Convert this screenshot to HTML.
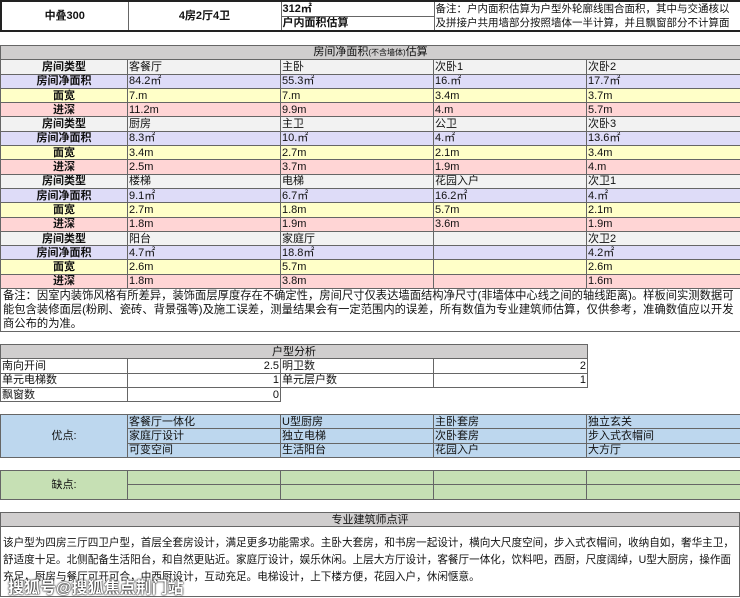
<!DOCTYPE html>
<html><head><meta charset="utf-8"><style>
*{margin:0;padding:0;box-sizing:border-box}
body{width:740px;height:598px;background:#fff;font-family:"Liberation Sans","Noto Sans CJK SC",sans-serif;font-size:11px;color:#111;position:relative;overflow:hidden}
table{border-collapse:collapse;table-layout:fixed;position:absolute;left:0}
td{border:1px solid #666;height:14.3px;line-height:12px;padding:0 1px;white-space:nowrap;overflow:hidden;font-size:11px}
.c{text-align:center}.r{text-align:right}
.g{background:#d0cece;text-align:center}
.t{background:#f2f2f2}.a{background:#dedcf8}.y{background:#ffffc8}.p{background:#ffd5d5}
.t td:first-child,.a td:first-child,.y td:first-child,.p td:first-child{text-align:center;font-weight:bold}
.b td{background:#bdd7ee}.gr td{background:#c6e0b4}
</style></head><body>
<table style="top:0;width:740px;border:2px solid #222">
<colgroup><col style="width:127px"><col style="width:153px"><col style="width:153px"><col style="width:307px"></colgroup>
<tr><td rowspan="2" class="c" style="font-weight:bold;height:28px">中叠300</td><td rowspan="2" class="c" style="font-weight:bold">4房2厅4卫</td><td style="font-weight:bold;height:14px">312㎡</td><td rowspan="2" style="white-space:normal;line-height:14px;font-size:10.5px;vertical-align:top;overflow:hidden">备注：户内面积估算为户型外轮廓线围合面积，其中与交通核以及拼接户共用墙部分按照墙体一半计算，并且飘窗部分不计算面</td></tr>
<tr><td style="font-weight:bold;height:14px">户内面积估算</td></tr>
</table>
<table style="top:45px;width:740px">
<colgroup><col style="width:127px"><col style="width:153px"><col style="width:153px"><col style="width:153px"><col style="width:154px"></colgroup>
<tr><td colspan="5" class="g">房间净面积<span style="font-size:8px">(不含墙体)</span>估算</td></tr>
<tr class="t"><td>房间类型</td><td>客餐厅</td><td>主卧</td><td>次卧1</td><td>次卧2</td></tr>
<tr class="a"><td>房间净面积</td><td>84.2㎡</td><td>55.3㎡</td><td>16.㎡</td><td>17.7㎡</td></tr>
<tr class="y"><td>面宽</td><td>7.m</td><td>7.m</td><td>3.4m</td><td>3.7m</td></tr>
<tr class="p"><td>进深</td><td>11.2m</td><td>9.9m</td><td>4.m</td><td>5.7m</td></tr>
<tr class="t"><td>房间类型</td><td>厨房</td><td>主卫</td><td>公卫</td><td>次卧3</td></tr>
<tr class="a"><td>房间净面积</td><td>8.3㎡</td><td>10.㎡</td><td>4.㎡</td><td>13.6㎡</td></tr>
<tr class="y"><td>面宽</td><td>3.4m</td><td>2.7m</td><td>2.1m</td><td>3.4m</td></tr>
<tr class="p"><td>进深</td><td>2.5m</td><td>3.7m</td><td>1.9m</td><td>4.m</td></tr>
<tr class="t"><td>房间类型</td><td>楼梯</td><td>电梯</td><td>花园入户</td><td>次卫1</td></tr>
<tr class="a"><td>房间净面积</td><td>9.1㎡</td><td>6.7㎡</td><td>16.2㎡</td><td>4.㎡</td></tr>
<tr class="y"><td>面宽</td><td>2.7m</td><td>1.8m</td><td>5.7m</td><td>2.1m</td></tr>
<tr class="p"><td>进深</td><td>1.8m</td><td>1.9m</td><td>3.6m</td><td>1.9m</td></tr>
<tr class="t"><td>房间类型</td><td>阳台</td><td>家庭厅</td><td></td><td>次卫2</td></tr>
<tr class="a"><td>房间净面积</td><td>4.7㎡</td><td>18.8㎡</td><td></td><td>4.2㎡</td></tr>
<tr class="y"><td>面宽</td><td>2.6m</td><td>5.7m</td><td></td><td>2.6m</td></tr>
<tr class="p"><td>进深</td><td>1.8m</td><td>3.8m</td><td></td><td>1.6m</td></tr>
<tr><td colspan="5" style="white-space:normal;line-height:14px;height:42px;vertical-align:top;padding:0 2px;font-size:11.3px">备注：因室内装饰风格有所差异，装饰面层厚度存在不确定性，房间尺寸仅表达墙面结构净尺寸(非墙体中心线之间的轴线距离)。样板间实测数据可能包含装修面层(粉刷、瓷砖、背景强等)及施工误差，测量结果会有一定范围内的误差，所有数值为专业建筑师估算，仅供参考，准确数值应以开发商公布的为准。</td></tr>
</table>
<table style="top:344px;width:587px">
<colgroup><col style="width:127px"><col style="width:153px"><col style="width:153px"><col style="width:154px"></colgroup>
<tr><td colspan="4" class="g">户型分析</td></tr>
<tr><td>南向开间</td><td class="r">2.5</td><td>明卫数</td><td class="r">2</td></tr>
<tr><td>单元电梯数</td><td class="r">1</td><td>单元层户数</td><td class="r">1</td></tr>
<tr><td>飘窗数</td><td class="r">0</td><td style="border:none"></td><td style="border:none"></td></tr>
</table>
<table style="top:414px;width:740px">
<colgroup><col style="width:127px"><col style="width:153px"><col style="width:153px"><col style="width:153px"><col style="width:154px"></colgroup>
<tr class="b"><td rowspan="3" class="c">优点:</td><td>客餐厅一体化</td><td>U型厨房</td><td>主卧套房</td><td>独立玄关</td></tr>
<tr class="b"><td>家庭厅设计</td><td>独立电梯</td><td>次卧套房</td><td>步入式衣帽间</td></tr>
<tr class="b"><td>可变空间</td><td>生活阳台</td><td>花园入户</td><td>大方厅</td></tr>
</table>
<table style="top:470px;width:740px">
<colgroup><col style="width:127px"><col style="width:153px"><col style="width:153px"><col style="width:153px"><col style="width:154px"></colgroup>
<tr class="gr"><td rowspan="2" class="c">缺点:</td><td></td><td></td><td></td><td></td></tr>
<tr class="gr"><td></td><td></td><td></td><td></td></tr>
</table>
<table style="top:512px;width:740px">
<tr><td class="g">专业建筑师点评</td></tr>
<tr><td style="white-space:normal;height:70px;line-height:17px;padding:8px 2px 0;vertical-align:top;font-size:10.6px">该户型为四房三厅四卫户型，首层全套房设计，满足更多功能需求。主卧大套房，和书房一起设计，横向大尺度空间，步入式衣帽间，收纳自如，奢华主卫，舒适度十足。北侧配备生活阳台，和自然更贴近。家庭厅设计，娱乐休闲。上层大方厅设计，客餐厅一体化，饮料吧，西厨，尺度阔绰，U型大厨房，操作面充足，厨房与餐厅可开可合，中西厨设计，互动充足。电梯设计，上下楼方便，花园入户，休闲惬意。</td></tr>
</table>
<div style="position:absolute;left:8px;top:574px;font-size:16px;color:#fff;font-weight:bold;text-shadow:0 0 2px #000,0 0 1px #000">搜狐号@搜狐焦点荆门站</div>
</body></html>
